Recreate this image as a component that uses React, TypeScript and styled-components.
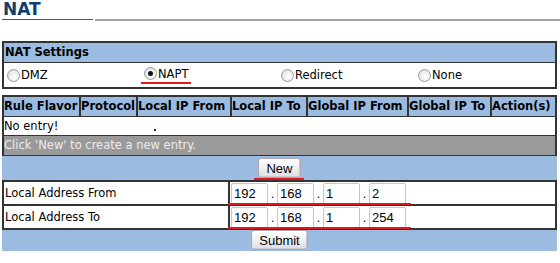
import React from "react";
import styled, { createGlobalStyle } from "styled-components";

const GlobalStyle = createGlobalStyle`
  html, body { margin: 0; padding: 0; background: #ffffff; }
  body { font-family: "DejaVu Sans", Verdana, sans-serif; font-size: 11.5px; color: #000; }
`;

const Page = styled.div`
  width: 560px;
  padding: 0 3px 0 2px;
  box-sizing: border-box;
`;

const TitleBlock = styled.div`
  display: flex;
  flex-direction: column;
`;

const Title = styled.h1`
  margin: 0 0 0 1px;
  font-size: 17px;
  line-height: 19px;
  font-weight: bold;
  color: #113e6d;
`;

const RuleLine = styled.div`
  display: flex;
  align-items: flex-start;
  gap: 2px;
  margin-right: -3px;
`;

const RuleDark = styled.div`
  width: 91px;
  height: 1px;
  background: #555;
`;

const RuleGray = styled.div`
  flex: 1;
  height: 2px;
  background: #a3a3a3;
`;

const Box = styled.div`
  margin-top: 20px;
  border: 2px solid #333;
  display: flex;
  flex-direction: column;
`;

const BoxHeader = styled.div`
  background: #9bbce0;
  height: 19px;
  line-height: 19px;
  padding-left: 1px;
  font-weight: bold;
  border-bottom: 1px solid #333;
`;

const RadioRow = styled.div`
  display: grid;
  grid-template-columns: repeat(4, 1fr);
  height: 24px;
  align-items: center;
  padding-left: 3px;
`;

const RadioLabel = styled.label`
  display: flex;
  align-items: center;
  gap: 1px;
`;

const RadioCircle = styled.span<{ $checked?: boolean }>`
  position: relative;
  width: 13px;
  height: 13px;
  border-radius: 50%;
  box-sizing: border-box;
  border: 1px solid #9a9aa8;
  background: radial-gradient(circle at 60% 60%, #ffffff 0%, #f0f0f0 45%, #cfcfd6 100%);
  &::after {
    content: "";
    display: ${(p) => (p.$checked ? "block" : "none")};
    position: absolute;
    left: 3px;
    top: 3px;
    width: 5px;
    height: 5px;
    border-radius: 50%;
    background: #111;
  }
`;

const Marked = styled.span<{ $l: number; $r: number; $b: number }>`
  position: relative;
  display: inline-flex;
  align-items: center;
  &::after {
    content: "";
    position: absolute;
    left: ${(p) => p.$l}px;
    right: ${(p) => p.$r}px;
    bottom: ${(p) => p.$b}px;
    height: 2px;
    background: #e3161e;
  }
`;

const Rules = styled.div`
  margin-top: 6px;
  display: flex;
  flex-direction: column;
`;

const HeadRow = styled.div`
  display: grid;
  grid-template-columns: 77px 57px 94px 76px 101px 83px 1fr;
  background: #9bbce0;
  border: 2px solid #333;
  border-bottom-width: 1px;
`;

const HeadCell = styled.div`
  font-weight: bold;
  font-size: 11.5px;
  height: 19px;
  line-height: 19px;
  white-space: nowrap;
  overflow: hidden;
  border-right: 2px solid #333;
  &:last-child { border-right: none; }
`;

const EmptyRow = styled.div`
  position: relative;
  height: 18px;
  line-height: 18px;
  background: #fff;
  border-left: 2px solid #333;
  border-right: 2px solid #333;
  border-bottom: 1px solid #333;
`;

const Cursor = styled.span`
  position: absolute;
  left: 150px;
  top: 12px;
  width: 2px;
  height: 2px;
  background: #222;
`;

const HintRow = styled.div`
  height: 19px;
  line-height: 19px;
  background: #9a9a9a;
  color: #ececec;
  border-left: 2px solid #333;
  border-right: 2px solid #333;
  border-bottom: 1px solid #333;
`;

const ButtonBar = styled.div<{ $top: number; $bottom: number }>`
  display: flex;
  justify-content: center;
  background: #9bbce0;
  padding: ${(p) => p.$top}px 0 ${(p) => p.$bottom}px;
`;

const Button = styled.button`
  font-family: "Liberation Sans", Arial, sans-serif;
  font-size: 13px;
  color: #000;
  height: 20px;
  padding: 0 7px;
  border: 1px solid #a9a9b4;
  border-radius: 3px;
  background: linear-gradient(#ffffff, #f1f1f1 50%, #dcdce2);
  box-shadow: inset -1px -1px 0 #c8c8d0;
`;

const FormTable = styled.div`
  border: 2px solid #333;
  display: flex;
  flex-direction: column;
  background: #fff;
`;

const FormRow = styled.div`
  display: grid;
  grid-template-columns: 226px 1fr;
  height: 22px;
  & + & { border-top: 2px solid #333; }
`;

const FormLabel = styled.div`
  line-height: 22px;
  padding-left: 1px;
  border-right: 2px solid #333;
`;

const IpField = styled.div`
  display: flex;
  align-items: center;
  padding-left: 1px;
`;

const IpInput = styled.input`
  width: 37px;
  height: 21px;
  box-sizing: border-box;
  font-family: "Liberation Sans", Arial, sans-serif;
  font-size: 13px;
  padding: 0 2px;
  border: 1px solid #c4c4d2;
  border-radius: 2px;
  background: #fff;
  color: #000;
`;

const Dot = styled.span`
  width: 9px;
  text-align: center;
  font-family: "Liberation Sans", Arial, sans-serif;
  font-size: 13px;
  line-height: 20px;
  padding-top: 2px;
`;

const IpGroup: React.FC<{ parts: string[] }> = ({ parts }) => (
  <IpField>
    <Marked $l={-3} $r={-5} $b={-1}>
      {parts.map((p, i) => (
        <React.Fragment key={i}>
          {i > 0 && <Dot>.</Dot>}
          <IpInput defaultValue={p} />
        </React.Fragment>
      ))}
    </Marked>
  </IpField>
);

const radios = [
  { label: "DMZ", checked: false },
  { label: "NAPT", checked: true },
  { label: "Redirect", checked: false },
  { label: "None", checked: false },
];

const heads = [
  "Rule Flavor",
  "Protocol",
  "Local IP From",
  "Local IP To",
  "Global IP From",
  "Global IP To",
  "Action(s)",
];

export default function App() {
  return (
    <>
      <GlobalStyle />
      <Page>
        <TitleBlock>
          <Title>NAT</Title>
          <RuleLine>
            <RuleDark />
            <RuleGray />
          </RuleLine>
        </TitleBlock>

        <Box>
          <BoxHeader>NAT Settings</BoxHeader>
          <RadioRow>
            {radios.map((r) =>
              r.checked ? (
                <div key={r.label}>
                  <Marked $l={-3} $r={-3} $b={-3}>
                    <RadioLabel>
                      <RadioCircle $checked />
                      {r.label}
                    </RadioLabel>
                  </Marked>
                </div>
              ) : (
                <RadioLabel key={r.label}>
                  <RadioCircle />
                  {r.label}
                </RadioLabel>
              )
            )}
          </RadioRow>
        </Box>

        <Rules>
          <HeadRow>
            {heads.map((h) => (
              <HeadCell key={h}>{h}</HeadCell>
            ))}
          </HeadRow>
          <EmptyRow>
            No entry!
            <Cursor />
          </EmptyRow>
          <HintRow>Click 'New' to create a new entry.</HintRow>
          <ButtonBar $top={2} $bottom={2}>
            <Marked $l={-4} $r={-3} $b={-2}>
              <Button>New</Button>
            </Marked>
          </ButtonBar>
          <FormTable>
            <FormRow>
              <FormLabel>Local Address From</FormLabel>
              <IpGroup parts={["192", "168", "1", "2"]} />
            </FormRow>
            <FormRow>
              <FormLabel>Local Address To</FormLabel>
              <IpGroup parts={["192", "168", "1", "254"]} />
            </FormRow>
          </FormTable>
          <ButtonBar $top={0} $bottom={1}>
            <Marked $l={-1} $r={-2} $b={-3}>
              <Button>Submit</Button>
            </Marked>
          </ButtonBar>
        </Rules>
      </Page>
    </>
  );
}
